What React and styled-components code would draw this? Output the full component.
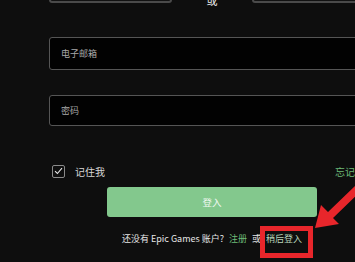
import React from "react";
import styled, { createGlobalStyle } from "styled-components";

const Global = createGlobalStyle`
  html, body { margin: 0; padding: 0; background: #0e0e0e; }
  body { font-family: "Noto Sans CJK SC", "Noto Sans", sans-serif; }
`;

const Root = styled.div`
  position: relative;
  width: 355px;
  height: 262px;
  overflow: hidden;
  background: #0e0e0e;
  padding-left: 49px;
  box-sizing: border-box;
`;

const TopRow = styled.div`
  display: flex;
  align-items: flex-end;
  width: 326px;
  height: 3px;
`;

const SocialButton = styled.div`
  box-sizing: border-box;
  height: 30px;
  width: ${(p) => p.$w}px;
  border: 2px solid #4a4a4a;
  border-radius: 3px;
  background: #121212;
  flex-shrink: 0;
`;

const OrGlyph = styled.div`
  flex: 1;
  display: flex;
  justify-content: center;
  font-size: 11px;
  line-height: 11px;
  color: #f2f2f2;
  margin-bottom: -3px;
`;

const Form = styled.div`
  display: flex;
  flex-direction: column;
  width: 326px;
  margin-top: 34px;
`;

const Field = styled.div`
  box-sizing: border-box;
  height: ${(p) => p.$h}px;
  margin-top: ${(p) => p.$mt || 0}px;
  border: 1px solid #555;
  border-radius: 3px;
  background: #020202;
  display: flex;
  align-items: center;
  padding-left: 11px;
  font-size: 9px;
  color: #a8a8a8;
`;

const OptionsRow = styled.div`
  display: flex;
  align-items: center;
  justify-content: space-between;
  height: 14px;
  margin-top: 38px;
`;

const Remember = styled.div`
  display: flex;
  align-items: center;
  gap: 10px;
  margin-left: 3px;
  font-size: 10px;
  color: #d8d8d8;
`;

const Box = styled.div`
  box-sizing: border-box;
  width: 13px;
  height: 13px;
  border: 1px solid #8a8a8a;
  border-radius: 2px;
  display: flex;
  align-items: center;
  justify-content: center;
`;

const Forgot = styled.div`
  font-size: 10px;
  color: #6dbb78;
  white-space: nowrap;
`;

const LoginButton = styled.div`
  align-self: center;
  width: 210px;
  height: 30px;
  margin-top: 9px;
  border-radius: 3px;
  background: #83c88d;
  display: flex;
  align-items: center;
  justify-content: center;
  font-size: 9.5px;
  color: #eef7ef;
`;

const Footer = styled.div`
  align-self: center;
  margin-top: 15px;
  font-size: 9px;
  line-height: 14px;
  color: #e6e6e6;
  white-space: nowrap;
  display: flex;
  gap: 5px;
`;

const Link = styled.span`
  color: ${(p) => p.$c || "#6dbb78"};
`;

const Highlight = styled.div`
  position: absolute;
  left: 260px;
  top: 226px;
  width: 53px;
  height: 32px;
  box-sizing: border-box;
  border: 5px solid #e8262b;
`;

const Arrow = styled.svg`
  position: absolute;
  left: 0;
  top: 0;
  pointer-events: none;
`;

export default function App() {
  return (
    <>
      <Global />
      <Root>
        <TopRow>
          <SocialButton $w={123} />
          <OrGlyph>或</OrGlyph>
          <SocialButton $w={123} />
        </TopRow>
        <Form>
          <Field $h={33}>电子邮箱</Field>
          <Field $h={31} $mt={25}>密码</Field>
          <OptionsRow>
            <Remember>
              <Box>
                <svg width="9" height="8" viewBox="0 0 9 8">
                  <path d="M1 4.2 L3.4 6.5 L8 1.2" fill="none" stroke="#e8e8e8" strokeWidth="1.1" />
                </svg>
              </Box>
              记住我
            </Remember>
            <Forgot>忘记密码</Forgot>
          </OptionsRow>
          <LoginButton>登入</LoginButton>
          <Footer>
            <span>还没有 Epic Games 账户?</span>
            <Link>注册</Link>
            <span>或</span>
            <Link $c="#b9d6ba">稍后登入</Link>
          </Footer>
        </Form>
        <Highlight />
        <Arrow width="355" height="262" viewBox="0 0 355 262">
          <polygon points="315,228 321,205 328,212 356,185 361,191 333,218 339,224" fill="#e8262b" />
        </Arrow>
      </Root>
    </>
  );
}
